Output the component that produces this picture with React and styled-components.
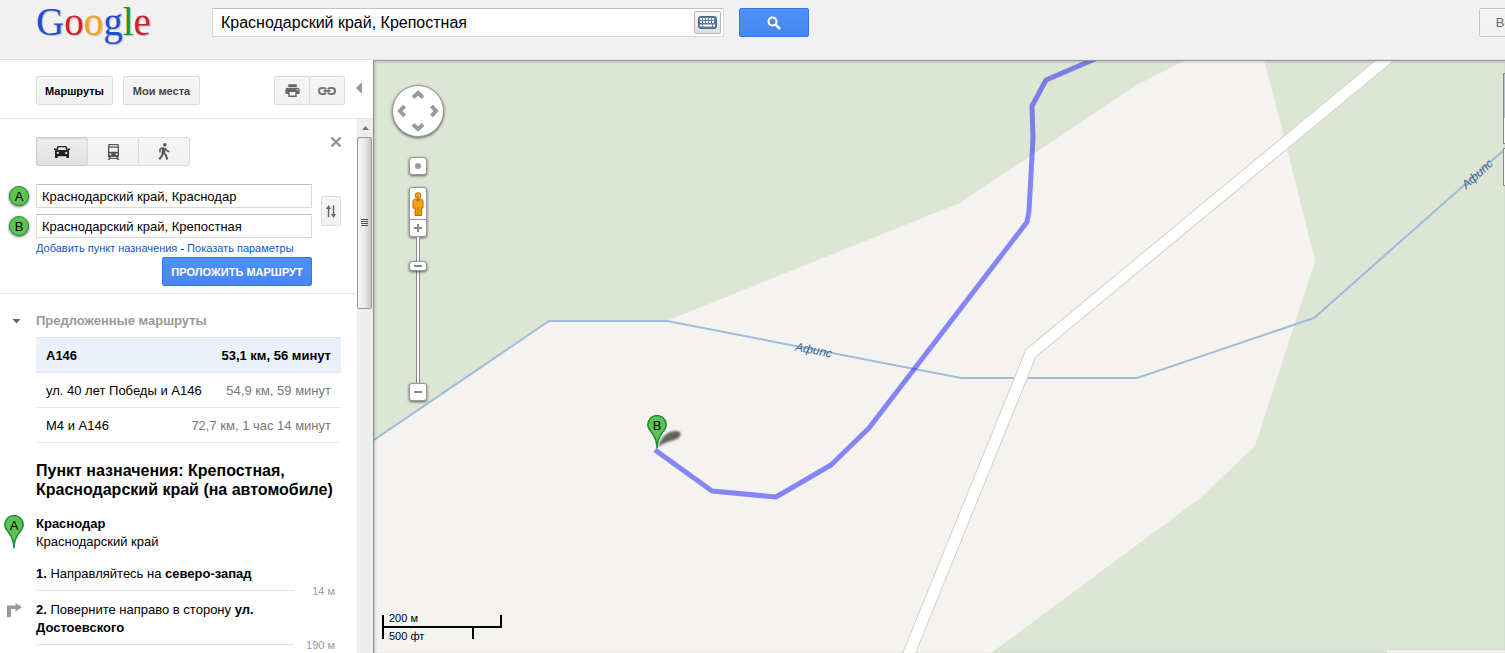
import React, { useState } from "react";
import styled, { createGlobalStyle, css } from "styled-components";
import { MdPrint } from "react-icons/md";

const ROUTES = [
  { name: "A146", info: "53,1 км, 56 минут" },
  { name: "ул. 40 лет Победы и А146", info: "54,9 км, 59 минут" },
  { name: "М4 и А146", info: "72,7 км, 1 час 14 минут" },
];

const CarIcon = () => (
  <svg width="16" height="14" viewBox="0 0 16 14" fill="#222">
    <path
      fillRule="evenodd"
      d="M3.6 1h8.800l1.400 3.600L15 5.600V13h-2.600v-1.800H3.600V13H1V5.600l1.200-1zM4.700 2.300L3.800 5h8.400l-.9-2.700zM3.800 6.800a1.100 1.100 0 1 0 0 2.200 1.100 1.100 0 0 0 0-2.200zm8.400 0a1.100 1.100 0 1 0 0 2.200 1.100 1.100 0 0 0 0-2.200z"
    />
    <path d="M0 3.600h2v1.400H0zM14 3.600h2v1.400h-2z" />
  </svg>
);

const BusIcon = () => (
  <svg width="13" height="16" viewBox="0 0 13 16" fill="#555">
    <path
      fillRule="evenodd"
      d="M2 0h9l1 1v12H1V1zM2.300 1.200v1.300h8.400V1.200zM2.300 3.800v3.900h8.400V3.800zM3.400 9.200a1 1 0 1 0 0 2 1 1 0 0 0 0-2zm6.200 0a1 1 0 1 0 0 2 1 1 0 0 0 0-2z"
    />
    <path d="M2.200 13h1.800L2.500 16H.7zM9 13h1.800l1.500 3h-1.800zM3 14h7v1H3z" />
  </svg>
);

const WalkIcon = () => (
  <svg width="12" height="17" viewBox="0 0 12 17" fill="none" stroke="#555">
    <circle cx="6.800" cy="1.800" r="1.800" fill="#555" stroke="none" />
    <path d="M6 5L5.300 10.500" strokeWidth="3.400" />
    <path d="M5.500 4.500L2 6.300V9.500M7 5l1.500 2.500 2.800 1.300" strokeWidth="1.500" />
    <path d="M4.800 10L4 12.500 1.300 16.300M6 10l2 2.500 1.200 4" strokeWidth="2" />
  </svg>
);

const LinkIcon = () => (
  <svg width="18" height="8" viewBox="0 0 18 8" fill="none" stroke="#777" strokeWidth="2">
    <path d="M8 2.500C7.500 1.500 7 1 6 1H4a3 3 0 0 0 0 6h2c1 0 1.500-.5 2-1.500M10 2.500C10.500 1.500 11 1 12 1h2a3 3 0 0 1 0 6h-2c-1 0-1.500-.5-2-1.500M5.500 4h7" />
  </svg>
);

const SearchIcon = () => (
  <svg width="14" height="14" viewBox="0 0 14 14" fill="none" stroke="#fff">
    <circle cx="5.500" cy="5.500" r="4" strokeWidth="2" />
    <path d="M8.500 8.500l4.500 4.500" strokeWidth="2.500" />
  </svg>
);

const KeyboardIcon = () => (
  <svg width="19" height="13" viewBox="0 0 19 13">
    <rect x="0.5" y="0.5" width="18" height="12" rx="2" fill="#5b7ba6" stroke="#48678f" />
    <path
      d="M2 3h15M2 6h15"
      stroke="#fff"
      strokeWidth="2"
      strokeDasharray="2 1"
    />
    <path d="M2 9.500h2M5 9.500h9M15 9.500h2" stroke="#fff" strokeWidth="2" />
  </svg>
);

const SwapIcon = () => (
  <svg width="10" height="13" viewBox="0 0 10 13" fill="none" stroke="#666" strokeWidth="1.5">
    <path d="M2.500 12V2M7.500 0.500v10.500" />
    <path d="M2.500 0L5 4H0zM7.500 13L5 9h5z" fill="#666" stroke="none" />
  </svg>
);

const TurnRightIcon = () => (
  <svg width="15" height="15" viewBox="0 0 15 15">
    <path d="M0 14V2.500h8.500V0L15 4.200 8.500 8.500V6H4v8z" fill="#999" />
  </svg>
);

const Pin = ({ letter }) => (
  <svg width="20" height="34" viewBox="0 0 20 34">
    <path
      d="M10 33.500C10 26 8.200 22 4.500 17.300 2 14.500.8 12.500.8 9.800a9.200 9.200 0 0 1 18.400 0c0 2.700-1.200 4.700-3.700 7.500C11.800 22 10 26 10 33.500z"
      fill="#60c250"
      stroke="#1c8c38"
      strokeWidth="1.5"
    />
    <text x="10" y="15" textAnchor="middle" fontSize="13" fill="#000">
      {letter}
    </text>
  </svg>
);

const Pegman = () => (
  <svg width="12" height="26" viewBox="0 0 12 26">
    <path
      d="M1 10.500C1 9 2 8 3.500 8h5c1.500 0 2.500 1 2.500 2.500v6c0 1-1.200 1-1.500.3V24.500H3V16.800c-.5.700-2 .7-2-.3z"
      fill="#f5a30c"
      stroke="#b76b06"
    />
    <path d="M6 16v8" stroke="#b76b06" />
    <circle cx="6" cy="4.500" r="2.800" fill="#f5a30c" stroke="#b76b06" />
    <path d="M3.500 8.500h5L6 11z" fill="#d2691e" />
  </svg>
);

const PanArrows = () => (
  <svg width="50" height="50" viewBox="0 0 50 50" fill="none" stroke="#999" strokeWidth="4">
    <path d="M20 11.500L25 7l5 4.500M20 38.500L25 43l5-4.500M11.500 20L7 25l4.500 5M38.500 20L43 25l-4.500 5" />
  </svg>
);

const MapCanvas = () => (
  <Canvas viewBox="0 0 1131 593" preserveAspectRatio="xMinYMin slice">
    <rect width="1131" height="593" fill="#f4f3f0" />
    <g fill="#dde6d5">
      <path d="M0 0V380L175 261H292L586 143L763 25L812 0z" />
      <path d="M890 0L910 77L941 201L881 386L825 439L617 593H1131V0z" />
    </g>
    <path
      d="M0 380L175 261H293L587 318H763L940 258L1131 89"
      fill="none"
      stroke="#a0bbdd"
      strokeWidth="2"
    />
    <g fill="none">
      <path d="M1131 -99L657 293L527 613" stroke="#d3d1c9" strokeWidth="13" />
      <path d="M1131 -99L657 293L527 613" stroke="#fff" strokeWidth="11" />
    </g>
    <g fontSize="12" fontStyle="italic" fill="#3f6394" textAnchor="middle">
      <text transform="translate(439 294) rotate(11)">Афипс</text>
      <text transform="translate(1106 117) rotate(-42)">Афипс</text>
    </g>
    <path
      d="M721 -1L672 20L658 46L659 78L655 151L653 162L495 368L457 405L402 437L338 431L281 390"
      fill="none"
      stroke="#0000ff"
      strokeOpacity="0.45"
      strokeWidth="5"
      strokeLinejoin="round"
    />
    <path
      d="M284 388C286 378 293 371 302 371C309 371 308 378 300 380C294 382 288 383 284 388z"
      fill="#000"
      fillOpacity="0.6"
      filter="url(#pinShadow)"
    />
    <filter id="pinShadow">
      <feGaussianBlur stdDeviation="1" />
    </filter>
    <g transform="translate(273 355)">
      <Pin letter="B" />
    </g>
  </Canvas>
);

const App = () => {
  const [mode, setMode] = useState("car");
  const [selected, setSelected] = useState(0);

  return (
    <Page>
      <GlobalStyle />

      <Header>
        <Logo href="#" aria-label="Google">
          <Letter $color="#1f4fd8">G</Letter>
          <Letter $color="#d0202e">o</Letter>
          <Letter $color="#f2a60d">o</Letter>
          <Letter $color="#1f4fd8">g</Letter>
          <Letter $color="#159a2c">l</Letter>
          <Letter $color="#d0202e">e</Letter>
        </Logo>
        <SearchBox>
          <SearchInput aria-label="Поиск" defaultValue="Краснодарский край, Крепостная" />
          <KeyboardButton aria-label="Клавиатура">
            <KeyboardIcon />
          </KeyboardButton>
        </SearchBox>
        <SearchButton aria-label="Найти">
          <SearchIcon />
        </SearchButton>
        <LoginButton>Войти</LoginButton>
      </Header>

      <Main>
        <Sidebar>
          <Toolbar>
            <TextButton $active>Маршруты</TextButton>
            <TextButton>Мои места</TextButton>
            <ButtonGroup $right>
              <GroupButton $width={36} aria-label="Печать">
                <MdPrint size={17} color="#666" />
              </GroupButton>
              <GroupButton $width={36} aria-label="Ссылка">
                <LinkIcon />
              </GroupButton>
            </ButtonGroup>
            <CollapseButton aria-label="Скрыть панель">
              <svg width="6" height="12" viewBox="0 0 6 12">
                <path d="M6 0v12L0 6z" fill="#999" />
              </svg>
            </CollapseButton>
          </Toolbar>

          <Body>
            <Panel>
              <Form onSubmit={(e) => e.preventDefault()}>
                <ModeRow>
                  <ButtonGroup>
                    <GroupButton type="button" $width={52} $pressed={mode === "car"} aria-label="На автомобиле" onClick={() => setMode("car")}>
                      <CarIcon />
                    </GroupButton>
                    <GroupButton type="button" $width={52} $pressed={mode === "bus"} aria-label="Общественный транспорт" onClick={() => setMode("bus")}>
                      <BusIcon />
                    </GroupButton>
                    <GroupButton type="button" $width={52} $pressed={mode === "walk"} aria-label="Пешком" onClick={() => setMode("walk")}>
                      <WalkIcon />
                    </GroupButton>
                  </ButtonGroup>
                  <CloseButton type="button" aria-label="Закрыть">
                    <svg width="10" height="10" viewBox="0 0 10 10" stroke="#999" strokeWidth="2.5">
                      <path d="M.5 .5l9 9M9.500 .5l-9 9" />
                    </svg>
                  </CloseButton>
                </ModeRow>

                <Points>
                  <Fields>
                    <Field>
                      <Badge htmlFor="from">A</Badge>
                      <PointInput id="from" defaultValue="Краснодарский край, Краснодар" />
                    </Field>
                    <Field>
                      <Badge htmlFor="to">B</Badge>
                      <PointInput id="to" defaultValue="Краснодарский край, Крепостная" />
                    </Field>
                  </Fields>
                  <SwapButton type="button" aria-label="Поменять местами">
                    <SwapIcon />
                  </SwapButton>
                </Points>

                <Links>
                  <Link href="#">Добавить пункт назначения</Link> - <Link href="#">Показать параметры</Link>
                </Links>
                <Submit>ПРОЛОЖИТЬ МАРШРУТ</Submit>
              </Form>

              <Suggested>
                <SuggestedTitle>
                  <svg width="9" height="5" viewBox="0 0 9 5">
                    <path d="M.5 0h8L4.500 4.500z" fill="#666" />
                  </svg>
                  Предложенные маршруты
                </SuggestedTitle>
                <RouteList>
                  {ROUTES.map((route, i) => (
                    <li key={route.name}>
                      <RouteButton $selected={i === selected} onClick={() => setSelected(i)}>
                        {route.name}
                        <RouteInfo>{route.info}</RouteInfo>
                      </RouteButton>
                    </li>
                  ))}
                </RouteList>
              </Suggested>

              <Destination>Пункт назначения: Крепостная, Краснодарский край (на автомобиле)</Destination>

              <Start>
                <Pin letter="A" />
                <div>
                  <b>Краснодар</b>
                  <br />
                  Краснодарский край
                </div>
              </Start>

              <Steps>
                <Step>
                  <span />
                  <StepText>
                    <b>1.</b> Направляйтесь на <b>северо-запад</b>
                  </StepText>
                  <Distance>14 м</Distance>
                </Step>
                <Step>
                  <TurnRightIcon />
                  <StepText>
                    <b>2.</b> Поверните направо в сторону <b>ул. Достоевского</b>
                  </StepText>
                  <Distance>190 м</Distance>
                </Step>
              </Steps>
            </Panel>

            <Scrollbar>
              <ScrollArrow>
                <svg width="7" height="4" viewBox="0 0 7 4">
                  <path d="M3.500 0L7 4H0z" fill="#777" />
                </svg>
              </ScrollArrow>
              <Thumb>
                <svg width="7" height="8" viewBox="0 0 7 8" stroke="#555">
                  <path d="M0 .5h7M0 2.500h7M0 4.500h7M0 6.500h7" />
                </svg>
              </Thumb>
            </Scrollbar>
          </Body>
        </Sidebar>

        <MapArea>
          <MapCanvas />
          <Controls>
            <PanButton aria-label="Переместить карту">
              <PanArrows />
            </PanButton>
            <HomeButton aria-label="Моё местоположение">
              <Dot />
            </HomeButton>
            <ZoomTop>
              <PegButton aria-label="Просмотр улиц">
                <Pegman />
              </PegButton>
              <ZoomIn aria-label="Увеличить">
                <svg width="8" height="8" viewBox="0 0 8 8" stroke="#888" strokeWidth="2">
                  <path d="M4 0v8M0 4h8" />
                </svg>
              </ZoomIn>
            </ZoomTop>
            <Track>
              <Handle aria-label="Масштаб">
                <Minus />
              </Handle>
            </Track>
            <SmallButton aria-label="Уменьшить">
              <Minus />
            </SmallButton>
          </Controls>
          <Scale>
            <Metric>200 м</Metric>
            <Imperial>500 фт</Imperial>
          </Scale>
          <MapTypes>
            <MapType $height={71} $image />
            <MapType $height={38} />
          </MapTypes>
          <Copyright />
        </MapArea>
      </Main>
    </Page>
  );
};

const GlobalStyle = createGlobalStyle`
  * {
    box-sizing: border-box;
  }

  body {
    margin: 0;
    font-family: "Liberation Sans", Arial, sans-serif;
    font-size: 13px;
    color: #000;
    background: #fff;
  }

  button,
  input {
    margin: 0;
    padding: 0;
    font: inherit;
  }

  button {
    cursor: pointer;
  }

  svg {
    display: block;
  }
`;

const center = css`
  display: flex;
  align-items: center;
  justify-content: center;
`;

const blue = css`
  border: 1px solid #3079ed;
  border-radius: 2px;
  background: linear-gradient(#4d90fe, #4787ed);
  color: #fff;
`;

const grey = css`
  border: 1px solid #dcdcdc;
  border-radius: 2px;
  background: linear-gradient(#f5f5f5, #f1f1f1);
  color: #444;
`;

const Page = styled.div`
  height: 100vh;

  display: flex;
  flex-direction: column;
  overflow: hidden;
`;

const Header = styled.header`
  height: 60px;
  flex: none;
  padding: 8px 0 0 36px;
  border-bottom: 1px solid #e0e0e0;
  background: #f1f1f1;

  display: flex;
  align-items: flex-start;
`;

const Logo = styled.a`
  width: 176px;
  flex: none;
  margin-top: -8px;

  font-family: "Liberation Serif", "Times New Roman", serif;
  font-size: 39px;
  line-height: 44px;
  text-decoration: none;
  text-shadow: 1px 1px 1px #bbb;
`;

const Letter = styled.span`
  color: ${(props) => props.$color};
`;

const SearchBox = styled.div`
  width: 512px;
  height: 29px;
  padding-right: 2px;
  border: 1px solid #d9d9d9;
  border-top-color: #c0c0c0;
  background: #fff;

  display: flex;
  align-items: center;
`;

const SearchInput = styled.input`
  flex: 1;
  min-width: 0;
  padding-left: 8px;
  border: 0;
  outline: 0;
  background: none;
  font-size: 16px;
`;

const KeyboardButton = styled.button`
  ${center}
  width: 27px;
  height: 23px;
  border: 1px solid #b5b5b5;
  border-radius: 2px;
  background: linear-gradient(#f8f8f8, #dedede);
`;

const SearchButton = styled.button`
  ${blue}
  ${center}
  width: 70px;
  height: 29px;
  margin-left: 15px;
`;

const LoginButton = styled.button`
  ${grey}
  width: 70px;
  height: 29px;
  margin: 0 -44px 0 auto;
  border-color: #c6c6c6;
  color: #666;
`;

const Main = styled.main`
  flex: 1;
  min-height: 0;

  display: flex;
`;

const Sidebar = styled.aside`
  width: 373px;
  flex: none;

  display: flex;
  flex-direction: column;
`;

const Toolbar = styled.div`
  height: 59px;
  flex: none;
  padding: 16px 11px 0 36px;
  border-bottom: 1px solid #e5e5e5;

  display: flex;
  align-items: flex-start;
`;

const TextButton = styled.button`
  ${grey}
  width: 77px;
  height: 29px;
  margin-right: 10px;
  font-size: 11px;
  font-weight: bold;
  color: ${(props) => (props.$active ? "#000" : "#444")};
`;

const ButtonGroup = styled.div`
  display: flex;
  margin-left: ${(props) => (props.$right ? "auto" : "0")};
`;

const GroupButton = styled.button`
  ${grey}
  ${center}
  width: ${(props) => props.$width}px;
  height: 29px;

  & + & {
    margin-left: -1px;
  }

  ${(props) =>
    props.$pressed &&
    css`
      border-color: #ccc;
      background: linear-gradient(#eee, #e0e0e0);
      box-shadow: inset 0 1px 2px rgba(0, 0, 0, 0.1);
    `}
`;

const CollapseButton = styled.button`
  height: 24px;
  margin-left: 11px;
  border: 0;
  background: none;
`;

const Body = styled.div`
  flex: 1;
  min-height: 0;

  display: flex;
`;

const Panel = styled.div`
  flex: 1;
  min-width: 0;
  overflow: hidden;
`;

const Form = styled.form`
  height: 175px;
  padding-top: 18px;
  border-bottom: 1px solid #e5e5e5;

  display: flex;
  flex-direction: column;
`;

const ModeRow = styled.div`
  padding: 0 16px 0 36px;

  display: flex;
  align-items: flex-start;
  justify-content: space-between;
`;

const CloseButton = styled.button`
  border: 0;
  background: none;
`;

const Points = styled.div`
  margin-top: 18px;

  display: flex;
  align-items: center;
`;

const Fields = styled.div`
  display: flex;
  flex-direction: column;
  gap: 6px;
`;

const Field = styled.div`
  width: 312px;
  padding-left: 9px;

  display: flex;
  align-items: center;
  gap: 7px;
`;

const Badge = styled.label`
  ${center}
  width: 20px;
  height: 20px;
  border: 1px solid #1c8c38;
  border-radius: 50%;
  background: #60c250;
  box-shadow: 0 1px 3px rgba(0, 0, 0, 0.6);
`;

const PointInput = styled.input`
  flex: 1;
  min-width: 0;
  height: 24px;
  padding: 0 5px;
  border: 1px solid #d9d9d9;
  border-top-color: #c0c0c0;
`;

const SwapButton = styled.button`
  ${grey}
  ${center}
  width: 20px;
  height: 30px;
  margin-left: 9px;
`;

const Links = styled.div`
  margin-top: 3px;
  padding-left: 36px;
  font-size: 11px;
  line-height: 14px;
  white-space: nowrap;
`;

const Link = styled.a`
  color: #15c;
  text-decoration: none;
`;

const Submit = styled.button`
  ${blue}
  width: 150px;
  height: 29px;
  margin: 2px 0 0 162px;
  font-size: 11px;
  font-weight: bold;
`;

const Suggested = styled.section`
  padding: 18px 16px 0 36px;
`;

const SuggestedTitle = styled.h2`
  margin: 0 0 7px -24px;
  font-size: 13px;
  line-height: 18px;
  color: #999;

  display: flex;
  align-items: center;
  gap: 15px;
`;

const RouteList = styled.ul`
  margin: 0;
  padding: 0;
  border-top: 1px solid #e5e5e5;
  list-style: none;
`;

const RouteInfo = styled.span`
  color: #777;
`;

const RouteButton = styled.button`
  width: 100%;
  height: 35px;
  padding: 0 10px;
  border: 0;
  border-bottom: 1px solid #e5e5e5;
  background: #fff;

  display: flex;
  align-items: center;
  justify-content: space-between;

  ${(props) =>
    props.$selected &&
    css`
      background: #eaf1fb;
      font-weight: bold;

      ${RouteInfo} {
        color: #000;
      }
    `}
`;

const Destination = styled.h1`
  margin: 18px 16px 0 36px;
  font-size: 16px;
  line-height: 19px;
`;

const Start = styled.div`
  margin-top: 16px;
  padding-left: 4px;
  line-height: 18px;

  display: flex;
  gap: 12px;
`;

const Steps = styled.ol`
  margin: 14px 0 0;
  padding: 0;
  list-style: none;
`;

const Step = styled.li`
  padding: 0 22px 10px 7px;
  line-height: 18px;

  display: grid;
  grid-template-columns: 29px 258px 1fr;

  svg {
    margin-top: 2px;
  }
`;

const StepText = styled.div`
  padding-bottom: 7px;
  border-bottom: 1px solid #e0e0e0;
`;

const Distance = styled.span`
  align-self: end;
  margin-bottom: -9px;
  font-size: 11px;
  text-align: right;
  color: #999;
`;

const Scrollbar = styled.div`
  width: 16px;
  flex: none;
  background: #eee;
`;

const ScrollArrow = styled.div`
  ${center}
  height: 18px;
`;

const Thumb = styled.div`
  ${center}
  width: 15px;
  height: 172px;
  border: 1px solid #979797;
  border-radius: 2px;
  background: linear-gradient(90deg, #f5f5f5, #e9e9eb 50%, #c8c8ca);
`;

const MapArea = styled.section`
  flex: 1;
  min-width: 0;
  border-left: 1px solid #8f8f8f;

  position: relative;
  overflow: hidden;

  &::after {
    content: "";
    position: absolute;
    inset: 0;
    border-top: 1px solid #9c9c9c;
    box-shadow: inset 1px 1px 3px rgba(0, 0, 0, 0.2);
    pointer-events: none;
  }
`;

const Canvas = styled.svg`
  width: 100%;
  height: 100%;
`;

const raised = css`
  ${center}
  border: 1px solid #999;
  border-radius: 3px;
  background: #fff;
  box-shadow: 0 1px 3px rgba(0, 0, 0, 0.6);
`;

const Controls = styled.div`
  position: absolute;
  top: 25px;
  left: 18px;

  display: flex;
  flex-direction: column;
  align-items: center;
`;

const PanButton = styled.button`
  ${raised}
  width: 52px;
  height: 52px;
  border-radius: 50%;
`;

const SmallButton = styled.button`
  ${raised}
  width: 18px;
  height: 18px;
`;

const HomeButton = styled(SmallButton)`
  margin: 20px 0 12px;
`;

const Dot = styled.span`
  width: 6px;
  height: 6px;
  border-radius: 50%;
  background: #999;
`;

const ZoomTop = styled.div`
  ${raised}
  width: 18px;
  flex-direction: column;
`;

const PegButton = styled.button`
  ${center}
  width: 16px;
  height: 31px;
  border: 0;
  background: none;
`;

const ZoomIn = styled.button`
  ${center}
  width: 16px;
  height: 17px;
  border: 0;
  border-top: 1px solid #999;
  background: none;
`;

const Track = styled.div`
  width: 4px;
  height: 146px;
  padding-top: 24px;
  border: solid #888;
  border-width: 0 1px;
  background: #fff;

  display: flex;
  justify-content: center;
`;

const Handle = styled.button`
  ${raised}
  flex: none;
  width: 18px;
  height: 10px;
`;

const Minus = styled.span`
  width: 8px;
  height: 2px;
  background: #888;
`;

const Scale = styled.div`
  position: absolute;
  left: 8px;
  bottom: 14px;
  width: 120px;
  font-size: 11px;
`;

const Metric = styled.div`
  height: 13px;
  padding-left: 5px;
  border: solid #000;
  border-width: 0 2px 2px;
  line-height: 6px;
`;

const Imperial = styled.div`
  width: 92px;
  height: 11px;
  padding-left: 5px;
  border: solid #000;
  border-width: 0 2px;
  line-height: 16px;
`;

const MapTypes = styled.div`
  position: absolute;
  top: 13px;
  right: 0;
  width: 2px;

  display: flex;
  flex-direction: column;
  gap: 4px;
`;

const MapType = styled.div`
  height: ${(props) => props.$height}px;
  border: 1px solid #888;
  border-right: 0;
  background: ${(props) => (props.$image ? "linear-gradient(#c3c8d6 64%, #fff 64%)" : "#fff")};
`;

const Copyright = styled.div`
  position: absolute;
  right: 0;
  bottom: 0;
  width: 118px;
  height: 4px;
  border-top: 1px solid #d6d6d2;
  background: #f4f3f0;
`;

export default App;
